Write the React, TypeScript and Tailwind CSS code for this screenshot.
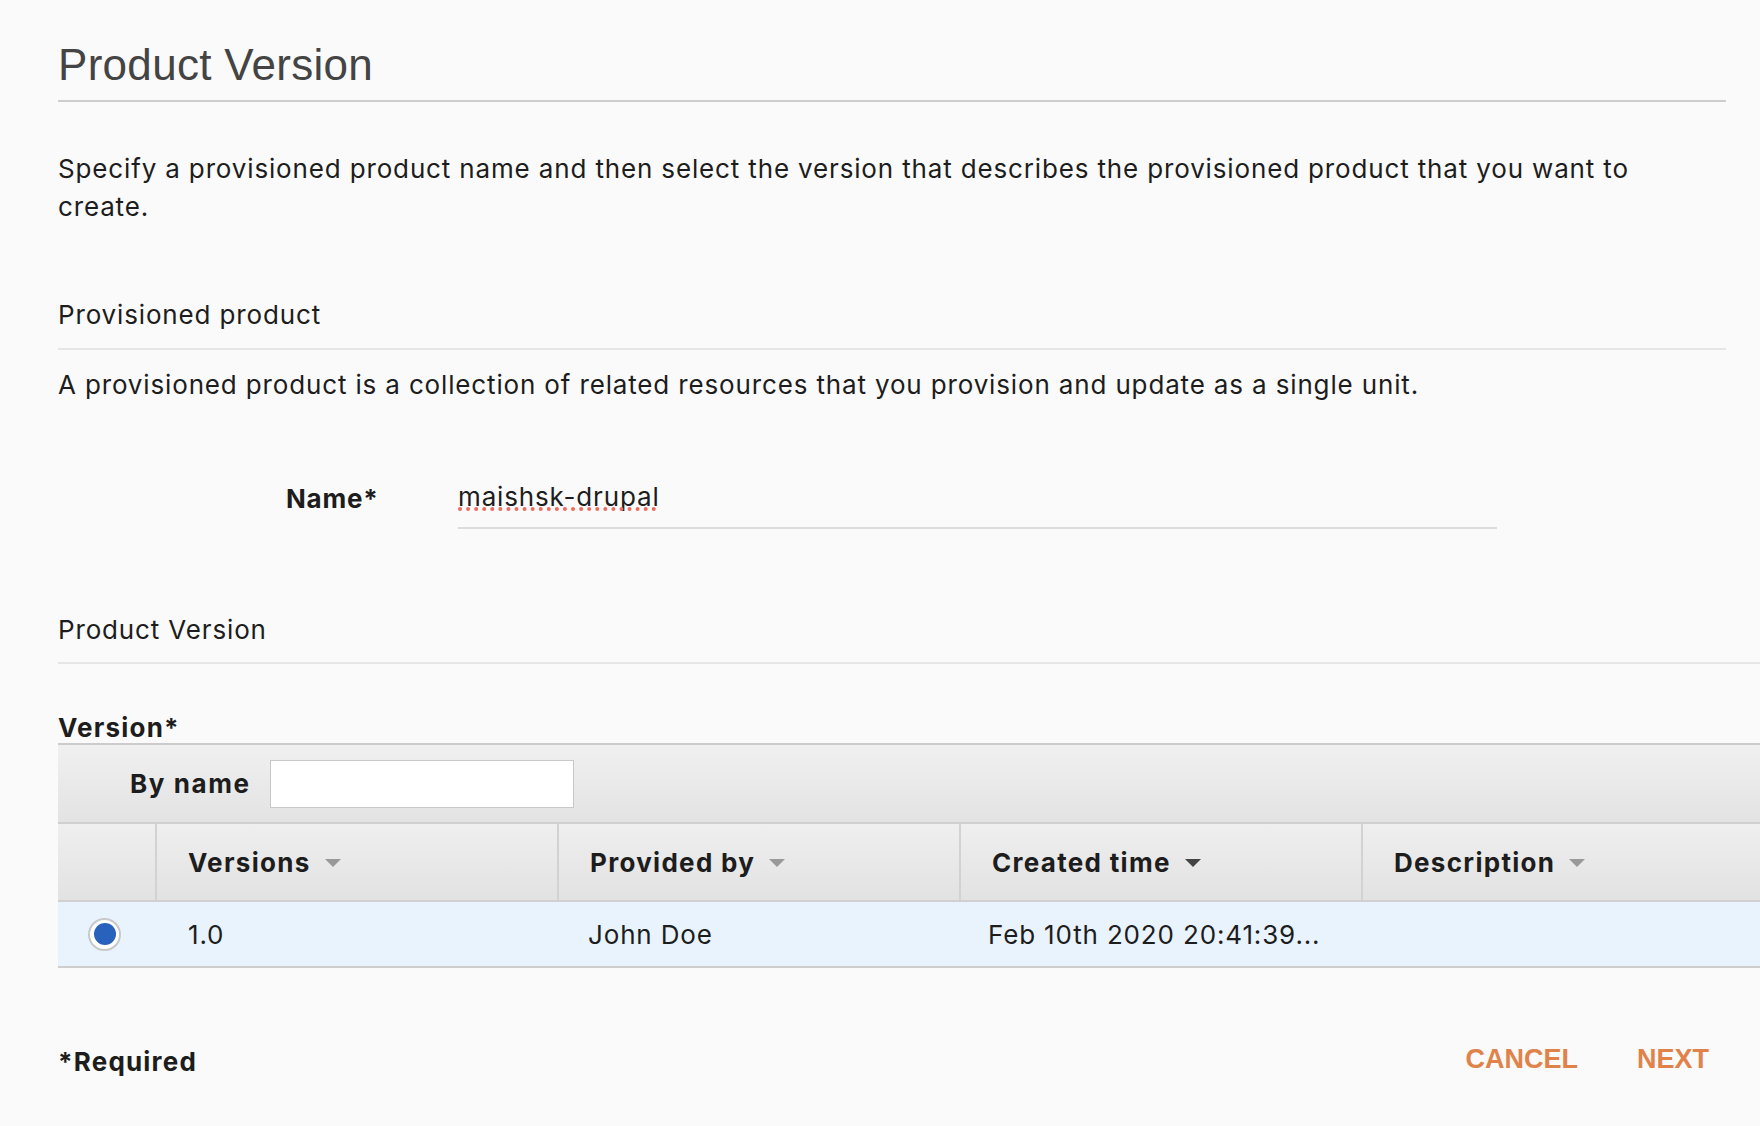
import React from 'react'

const columns = [
  { name: 'Versions', active: false },
  { name: 'Provided by', active: false },
  { name: 'Created time', active: true },
  { name: 'Description', active: false },
]

const body = { fontFamily: 'Inter, "Noto Sans", sans-serif' }
const heading = { fontFamily: '"Liberation Sans", Arial, sans-serif' }

function Caret({ active }: { active: boolean }) {
  return (
    <svg width="16" height="8" viewBox="0 0 16 8" className="ml-[14px] mt-[2px]">
      <polygon points="0,0 16,0 8,8" fill={active ? '#444444' : '#999999'} />
    </svg>
  )
}

export default function App() {
  return (
    <div
      className="min-h-screen w-full bg-[#fafafa] overflow-hidden text-[#1d1d1d] text-[26px] tracking-[0.85px]"
      style={body}
    >
      <div className="pl-[58px]">
        <div className="mr-[34px]">
          <h1
            className="pt-[43px] pb-[13px] text-[44px] leading-[44px] tracking-[0.3px] text-[#444444] border-b-2 border-[#cdcdcd]"
            style={heading}
          >
            Product Version
          </h1>

          <p className="mt-[48px] leading-[38px] pr-[60px]">
            Specify a provisioned product name and then select the version that describes the provisioned product that you want to create.
          </p>

          <div className="mt-[70px] pb-[14px] leading-[38px] border-b-2 border-[#e6e6e6]">
            Provisioned product
          </div>

          <p className="mt-[16px] leading-[38px]">
            A provisioned product is a collection of related resources that you provision and update as a single unit.
          </p>

          <div className="mt-[74px] flex items-start">
            <label className="ml-[228px] w-[172px] mt-[2px] leading-[38px] font-bold tracking-[0.8px]">Name*</label>
            <div className="w-[1039px] pb-[11px] border-b-2 border-[#dcdcdc] leading-[38px]">
              <span className="relative">
                maishsk-drupal
                <span className="absolute left-0 right-[4px] bottom-[1px] border-b-[4px] border-dotted border-[#ee6b5e]" />
              </span>
            </div>
          </div>
        </div>

        <div className="mt-[82px] pb-[13px] leading-[38px] border-b-2 border-[#e6e6e6]">
          Product Version
        </div>

        <div className="mt-[49px] leading-[30px] font-bold tracking-[1.2px]">Version*</div>

        <div className="border-t-2 border-[#cccccc]">
          <div className="h-[79px] flex items-center bg-gradient-to-b from-[#f0f0f0] to-[#e3e3e3] border-b-2 border-[#d0d0d0]">
            <span className="ml-[72px] font-bold tracking-[1.6px]">By name</span>
            <input
              type="text"
              className="ml-[19px] w-[304px] h-[48px] bg-white border border-[#c8c8c8] outline-none"
            />
          </div>

          <div className="grid grid-cols-[97px_402px_402px_402px_1fr] h-[78px] bg-gradient-to-b from-[#efefef] to-[#e2e2e2] border-b-2 border-[#d0d0d0]">
            <div />
            {columns.map((col) => (
              <div key={col.name} className="flex items-center pl-[31px] border-l-2 border-[#d2d2d2]">
                <span className="font-bold tracking-[1.3px]">{col.name}</span>
                <Caret active={col.active} />
              </div>
            ))}
          </div>

          <div className="grid grid-cols-[97px_402px_402px_402px_1fr] h-[66px] bg-[#e9f3fe] border-b-2 border-[#cdcdcd]">
            <div className="flex items-center justify-center pr-[4px]">
              <div className="w-[33px] h-[33px] rounded-full border-2 border-[#c8c8c8] bg-white flex items-center justify-center">
                <div className="w-[22px] h-[22px] rounded-full bg-[#2862bd]" />
              </div>
            </div>
            <div className="flex items-center pl-[33px]">1.0</div>
            <div className="flex items-center pl-[31px]">John Doe</div>
            <div className="flex items-center pl-[29px]">Feb 10th 2020 20:41:39...</div>
            <div />
          </div>
        </div>

        <div className="mt-[75px] mr-[51px] flex justify-between items-start">
          <span className="leading-[38px] font-bold tracking-[1.2px]">*Required</span>
          <div
            className="flex gap-[59px] mt-[-3px] text-[27px] leading-[38px] tracking-normal font-bold text-[#e0834a]"
            style={heading}
          >
            <button type="button">CANCEL</button>
            <button type="button">NEXT</button>
          </div>
        </div>
      </div>
    </div>
  )
}
